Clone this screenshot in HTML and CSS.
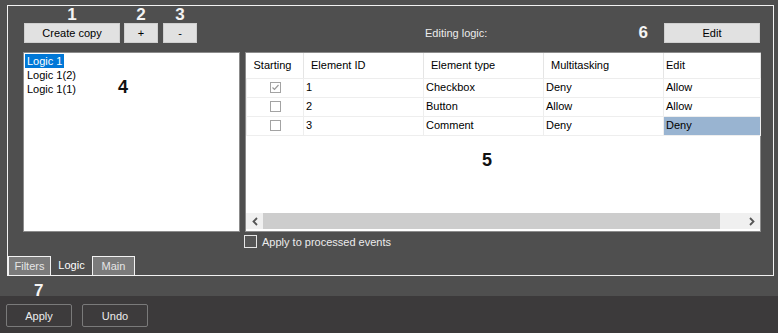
FILE: index.html
```html
<!DOCTYPE html>
<html lang="en">
<head>
    <meta charset="UTF-8">
    <title>Logic settings</title>
    <link rel="stylesheet" href="styles.css">
</head>
<body>
    <div class="window">
        <div class="frame">
            <div class="toolbar">
                <div class="tool"><span class="mark">1</span><button class="btn btn-wide">Create copy</button></div>
                <div class="tool"><span class="mark">2</span><button class="btn btn-small">+</button></div>
                <div class="tool tool-minus"><span class="mark">3</span><button class="btn btn-small">-</button></div>
                <span class="edit-label">Editing logic:</span>
                <span class="mark mark-six">6</span>
                <button class="btn btn-edit">Edit</button>
            </div>

            <div class="main">
                <div class="list">
                    <div class="item sel"><span>Logic 1</span></div>
                    <div class="item"><span>Logic 1(2)</span></div>
                    <div class="item"><span>Logic 1(1)</span></div>
                    <span class="mark mark-dark mark-four">4</span>
                </div>

                <div class="grid">
                    <table>
                        <colgroup>
                            <col style="width:57px">
                            <col style="width:120px">
                            <col style="width:120px">
                            <col style="width:120px">
                            <col style="width:97px">
                        </colgroup>
                        <thead>
                            <tr><th>Starting</th><th>Element ID</th><th>Element type</th><th>Multitasking</th><th>Edit</th></tr>
                        </thead>
                        <tbody>
                            <tr>
                                <td class="start"><span class="cb cb-on"><svg width="9" height="9" viewBox="0 0 9 9"><path d="M1.5 4.5 L3.5 6.5 L7.5 2" stroke="#9a9a9a" stroke-width="1.2" fill="none"/></svg></span></td>
                                <td>1</td><td>Checkbox</td><td>Deny</td><td>Allow</td>
                            </tr>
                            <tr>
                                <td class="start"><span class="cb"></span></td>
                                <td>2</td><td>Button</td><td>Allow</td><td>Allow</td>
                            </tr>
                            <tr>
                                <td class="start"><span class="cb"></span></td>
                                <td>3</td><td>Comment</td><td>Deny</td><td class="picked">Deny</td>
                            </tr>
                        </tbody>
                    </table>
                    <div class="grid-fill"></div>
                    <div class="hscroll">
                        <span class="arrow"><svg width="6" height="9" viewBox="0 0 6 9"><path d="M5 1 L1.5 4.5 L5 8" stroke="#555" stroke-width="1.8" fill="none"/></svg></span>
                        <span class="thumb"></span>
                        <span class="track"></span>
                        <span class="arrow"><svg width="6" height="9" viewBox="0 0 6 9"><path d="M1 1 L4.5 4.5 L1 8" stroke="#555" stroke-width="1.8" fill="none"/></svg></span>
                    </div>
                    <span class="mark mark-dark mark-five">5</span>
                </div>
            </div>

            <div class="apply-row">
                <span class="box"></span>
                <span>Apply to processed events</span>
            </div>

            <div class="tabs">
                <span class="tab tab-off">Filters</span>
                <span class="tab tab-on">Logic</span>
                <span class="tab tab-off">Main</span>
            </div>
        </div>

        <div class="note-row"><span class="mark">7</span></div>

        <div class="bottom-bar">
            <button class="btn-dark">Apply</button>
            <button class="btn-dark">Undo</button>
        </div>
    </div>
</body>
</html>
```

FILE: styles.css
```css
* {
    box-sizing: border-box;
}
body {
    margin: 0;
    background: #3c3a3b;
    font-family: "Liberation Sans", Arial, sans-serif;
    font-size: 11px;
}
.window {
    width: 778px;
    height: 333px;
    background: #4f4f4f;
    display: flex;
    flex-direction: column;
}
.frame {
    margin: 5px 0 0 7px;
    width: 767px;
    height: 271px;
    border: 1px solid #f2f2f2;
    display: flex;
    flex-direction: column;
}

/* top row */
.toolbar {
    display: flex;
    align-items: flex-end;
    height: 37px;
    padding: 0 13px 0 16px;
}
.tool {
    display: flex;
    flex-direction: column;
    align-items: center;
    margin-left: 4px;
}
.tool:first-child {
    margin-left: 0;
}
.tool-minus {
    margin-left: 5px;
}
.mark {
    font-weight: bold;
    font-size: 17px;
    line-height: 17px;
    color: #f4f4f4;
}
.btn {
    height: 20px;
    padding: 0;
    border: 1px solid #cfcfcf;
    background: #e1e1e1;
    font-family: "Liberation Sans", Arial, sans-serif;
    font-size: 11px;
    color: #000;
}
.btn-wide {
    width: 96px;
}
.btn-small {
    width: 34px;
}
.btn-edit {
    width: 96px;
}
.edit-label {
    margin-left: 228px;
    line-height: 20px;
    color: #ececec;
}
.mark-six {
    margin-left: auto;
    margin-right: 16px;
    line-height: 20px;
}

/* list and grid */
.main {
    display: flex;
    gap: 5px;
    margin-top: 9px;
    padding-left: 15px;
    height: 180px;
}
.list {
    position: relative;
    width: 217px;
    padding: 1px;
    background: #fff;
    border: 1px solid #8c8c8c;
}
.item span {
    display: inline-block;
    padding: 0 2px;
    line-height: 14px;
    color: #000;
}
.item.sel span {
    background: #0078d7;
    color: #fff;
}
.mark-dark {
    position: absolute;
    font-size: 18px;
    line-height: 18px;
    color: #111;
}
.mark-four {
    left: 94px;
    top: 25px;
}
.mark-five {
    left: 236px;
    top: 98px;
}
.grid {
    position: relative;
    width: 516px;
    background: #fff;
    border: 1px solid #8c8c8c;
    display: flex;
    flex-direction: column;
}
table {
    width: 514px;
    border-collapse: collapse;
    table-layout: fixed;
}
th {
    height: 25px;
    padding: 0 0 0 7px;
    font-weight: normal;
    text-align: left;
    color: #000;
    border-right: 1px solid #e5e5e5;
    border-bottom: 1px solid #ededed;
}
th:last-child {
    padding-left: 2px;
}
td {
    height: 19px;
    padding: 0 0 1px 2px;
    color: #000;
    border: 1px solid #eeeeee;
    border-top: 0;
}
td.start {
    padding: 0;
}
.cb {
    display: block;
    width: 11px;
    height: 11px;
    margin: 0 auto;
    border: 1px solid #a3a3a3;
    background: #fff;
}
.cb svg {
    display: block;
}
td.picked {
    background: #99b4d1;
}
.grid-fill {
    flex: 1;
}
.hscroll {
    height: 16px;
    margin-bottom: 2px;
    display: flex;
    background: #f0f0f0;
}
.arrow {
    width: 17px;
    display: flex;
    align-items: center;
    justify-content: center;
}
.thumb {
    width: 457px;
    background: #cdcdcd;
}
.track {
    flex: 1;
}

/* checkbox row */
.apply-row {
    display: flex;
    align-items: center;
    gap: 5px;
    margin-top: 3px;
    padding-left: 236px;
    height: 13px;
    color: #ececec;
}
.box {
    width: 13px;
    height: 13px;
    border: 1px solid #e6e6e6;
    background: #555;
}

/* tabs */
.tabs {
    margin-top: auto;
    display: flex;
    height: 19px;
}
.tab {
    width: 43px;
    text-align: center;
    line-height: 18px;
    color: #e6e6e6;
}
.tab-off {
    background: #7b7b7b;
    border: 1px solid #f2f2f2;
    border-bottom: 0;
}
.tab-on {
    width: 41px;
    line-height: 18px;
    color: #fff;
}

/* bottom */
.note-row {
    height: 20px;
    padding: 6px 0 0 34px;
}
.bottom-bar {
    flex: 1;
    display: flex;
    gap: 10px;
    padding: 8px 0 0 6px;
    background: #3c3a3b;
}
.btn-dark {
    width: 66px;
    height: 23px;
    padding: 0;
    border: 1px solid #7a7a7a;
    border-radius: 2px;
    background: #3d3b3c;
    color: #ececec;
    font-family: "Liberation Sans", Arial, sans-serif;
    font-size: 11px;
}
```
